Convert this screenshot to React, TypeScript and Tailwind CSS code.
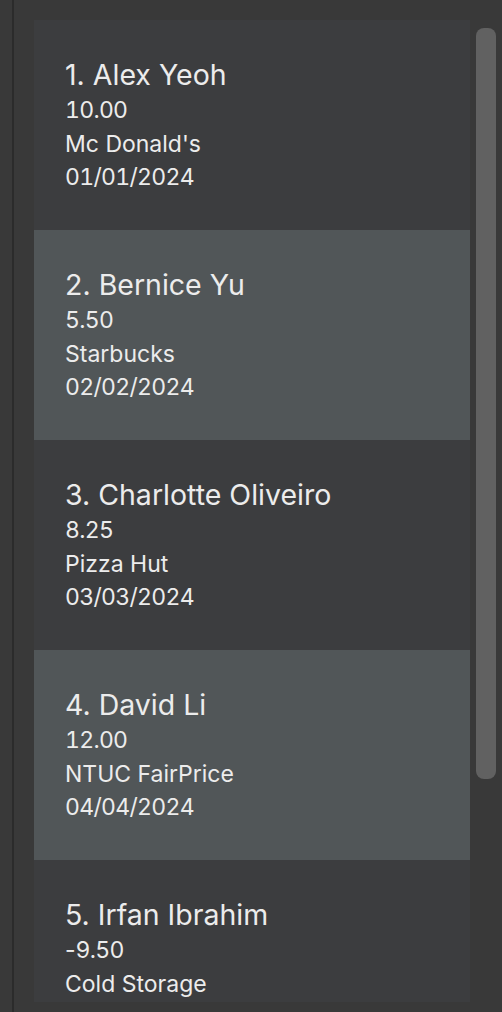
const expenses = [
  { name: "Alex Yeoh", amount: "10.00", place: "Mc Donald's", date: "01/01/2024" },
  { name: "Bernice Yu", amount: "5.50", place: "Starbucks", date: "02/02/2024" },
  { name: "Charlotte Oliveiro", amount: "8.25", place: "Pizza Hut", date: "03/03/2024" },
  { name: "David Li", amount: "12.00", place: "NTUC FairPrice", date: "04/04/2024" },
  { name: "Irfan Ibrahim", amount: "-9.50", place: "Cold Storage", date: "05/05/2024" },
];

function Amount({ value }: { value: string }) {
  // keep the minus sign proportional so it hugs the digits
  if (value.startsWith("-")) {
    return (
      <>
        <span className="normal-nums tracking-normal">-</span>
        {value.slice(1)}
      </>
    );
  }
  return <>{value}</>;
}

function ExpenseCard({ index, item }: { index: number; item: (typeof expenses)[number] }) {
  const even = index % 2 === 1;
  return (
    <div className={`h-[210px] shrink-0 pl-[31px] pt-[37px] text-[#ececec] ${even ? "bg-[#515658]" : "bg-[#3c3d3f]"}`}>
      <div className="text-[28.5px] leading-[36px]">
        {index + 1}. {item.name}
      </div>
      <div className="mt-px text-[23px] leading-[33.5px] tabular-nums tracking-[-0.7px]">
        <Amount value={item.amount} />
      </div>
      <div className="text-[23px] leading-[33.5px]">{item.place}</div>
      <div className="text-[23px] leading-[33.5px] tabular-nums tracking-[-0.7px]">{item.date}</div>
    </div>
  );
}

export default function App() {
  return (
    <div className="flex h-[1012px] w-[502px] bg-[#393939] font-['Inter',sans-serif]">
      <div className="w-[12px] shrink-0" />
      <div className="w-[2px] shrink-0 bg-[#2b2b2b]" />
      <div className="w-[20px] shrink-0" />
      <div className="mt-[20px] flex h-[982px] w-[436px] flex-col overflow-hidden">
        {expenses.map((e, i) => (
          <ExpenseCard key={i} index={i} item={e} />
        ))}
      </div>
      <div className="ml-[6px] w-[20px] shrink-0 pt-[28px]">
        <div className="h-[751px] w-[20px] rounded-[8px] bg-[#616161]" />
      </div>
    </div>
  );
}
